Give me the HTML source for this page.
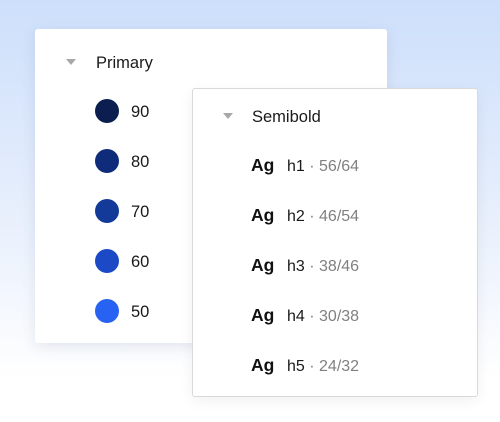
<!DOCTYPE html>
<html><head><style>
html,body{margin:0;padding:0}
body{width:500px;height:422px;position:relative;overflow:hidden;font-family:"Liberation Sans",sans-serif;
background:linear-gradient(180deg,#cddffb 0%,#e4edfc 45%,#ffffff 90%);}
.card{position:absolute;background:#fff;}
#l{left:35px;top:29px;width:352px;height:314px;box-shadow:0 4px 14px rgba(60,80,120,.12);border-radius:3px}
#r{left:192px;top:88px;width:284px;height:307px;border:1px solid #d9d9d9;border-radius:3px;box-shadow:0 4px 14px rgba(0,0,0,.06)}
.tri{position:absolute;width:0;height:0;border-left:5px solid transparent;border-right:5px solid transparent;border-top:6px solid #a8a8a8}
.t{position:absolute;font-size:16.5px;color:#1a1a1a;line-height:20px}
.c{position:absolute;width:24px;height:24px;border-radius:50%}
.ag{position:absolute;font-size:17.5px;font-weight:bold;color:#111;line-height:20px}
.h{position:absolute;font-size:16px;color:#1a1a1a;line-height:20px}
.h span{color:#808080}
</style></head><body>
<div class="card" id="l"></div>
<div class="tri" style="left:66px;top:59px"></div>
<div class="t" style="left:96px;top:53px">Primary</div>
<div class="c" style="left:95px;top:99px;background:#0b1e4f"></div><div class="t" style="left:131px;top:102px">90</div>
<div class="c" style="left:95px;top:149px;background:#0e2c7a"></div><div class="t" style="left:131px;top:152px">80</div>
<div class="c" style="left:95px;top:199px;background:#133a99"></div><div class="t" style="left:131px;top:202px">70</div>
<div class="c" style="left:95px;top:249px;background:#1c4ac7"></div><div class="t" style="left:131px;top:252px">60</div>
<div class="c" style="left:95px;top:299px;background:#2862f2"></div><div class="t" style="left:131px;top:302px">50</div>
<div class="card" id="r"></div>
<div class="tri" style="left:223px;top:113px"></div>
<div class="t" style="left:252px;top:107px">Semibold</div>
<div class="ag" style="left:251px;top:155px">Ag</div><div class="h" style="left:287px;top:157px">h1 <span>· 56/64</span></div>
<div class="ag" style="left:251px;top:205px">Ag</div><div class="h" style="left:287px;top:207px">h2 <span>· 46/54</span></div>
<div class="ag" style="left:251px;top:255px">Ag</div><div class="h" style="left:287px;top:257px">h3 <span>· 38/46</span></div>
<div class="ag" style="left:251px;top:305px">Ag</div><div class="h" style="left:287px;top:307px">h4 <span>· 30/38</span></div>
<div class="ag" style="left:251px;top:355px">Ag</div><div class="h" style="left:287px;top:357px">h5 <span>· 24/32</span></div>
</body></html>
